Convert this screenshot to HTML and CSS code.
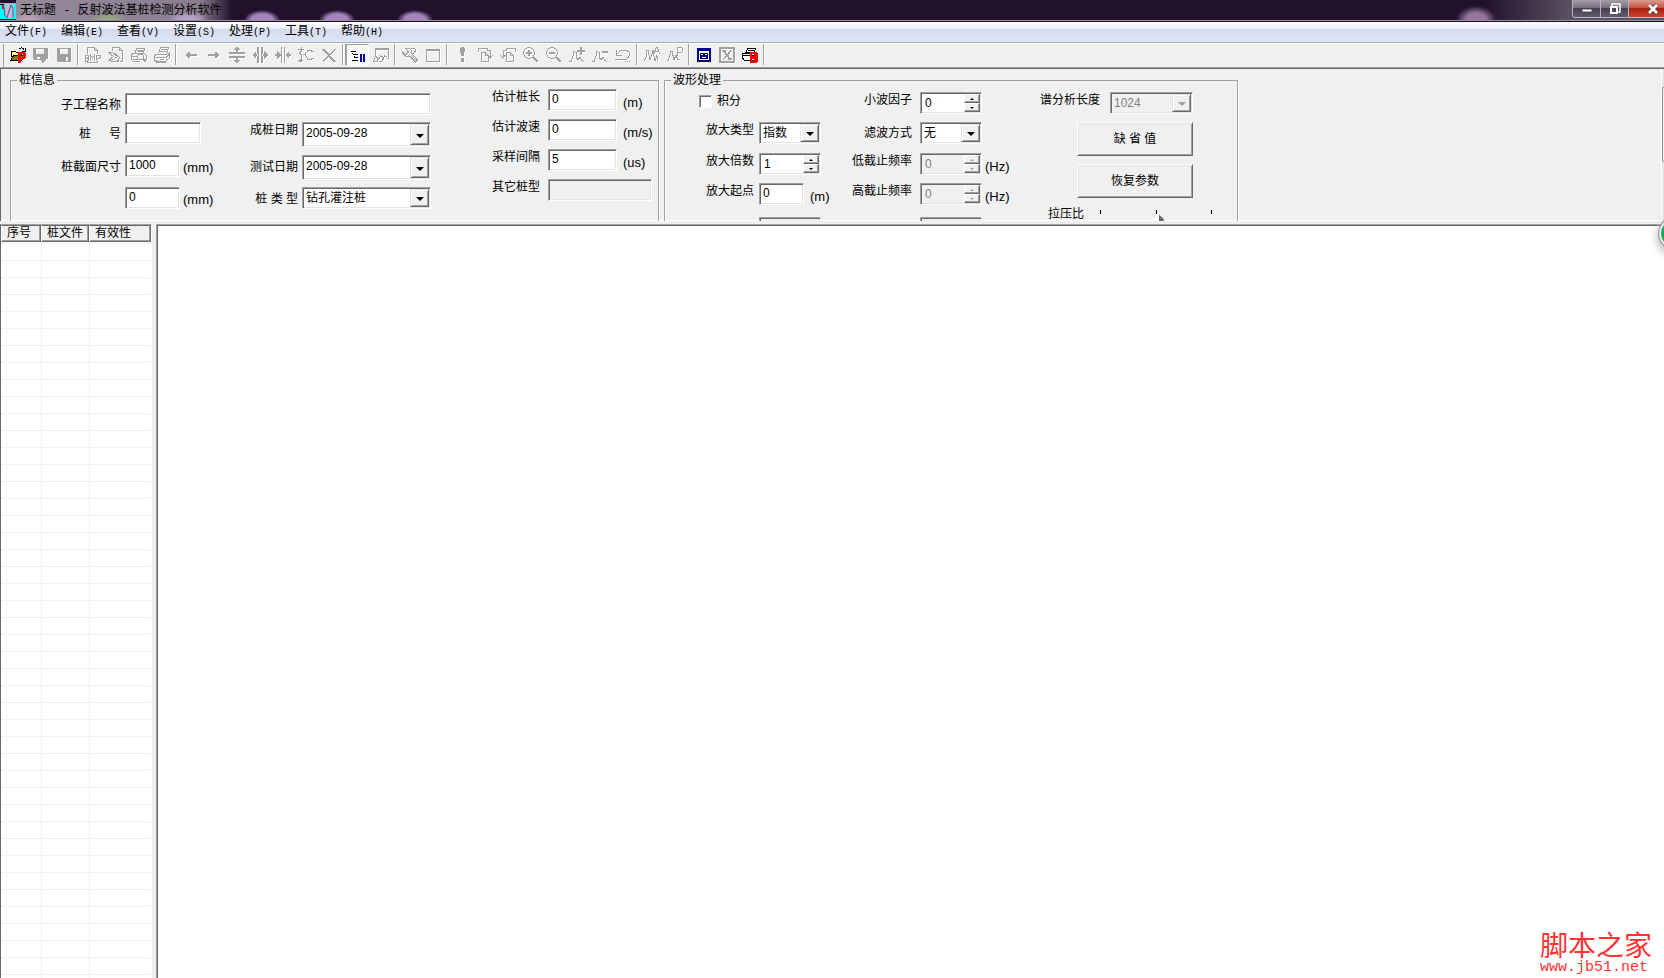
FILE: index.html
```html
<!DOCTYPE html>
<html lang="zh-CN">
<head>
    <meta charset="UTF-8">
    <meta name="viewport" content="width=device-width, initial-scale=1.0">
    <title>无标题 - 反射波法基桩检测分析软件</title>
    <link rel="stylesheet" href="styles.css">
</head>
<body>

<header class="titlebar">
    <svg class="app-icon" viewBox="0 0 16 16">
        <rect width="16" height="16" fill="#00ffff"/>
        <rect x="5" y="1" width="9" height="14" fill="#c0c0c0"/>
        <path d="M0 1h4v4h-1v-3h-3z" fill="#000"/>
        <path d="M2 2h2v4h-2z" fill="#f00"/>
        <path d="M4 4l1 9 2 2 2-7 2-6 2 3v10" fill="none" stroke="#4848d0"/>
    </svg>
    <h1 class="title">无标题 - 反射波法基桩检测分析软件</h1>
    <div class="window-buttons">
        <button class="win-btn" aria-label="最小化">
            <svg viewBox="0 0 12 12"><rect x="1" y="6" width="10" height="3" fill="#fff" stroke="#4b4858"/></svg>
        </button>
        <button class="win-btn" aria-label="还原">
            <svg viewBox="0 0 12 12"><path d="M3 3v-2h8v8h-2" fill="none" stroke="#fff" stroke-width="1.5"/><rect x="2" y="4" width="6" height="6" fill="#4b4858" stroke="#fff" stroke-width="2"/></svg>
        </button>
        <button class="win-btn win-close" aria-label="关闭">
            <svg viewBox="0 0 12 12"><path d="M2 2l8 8M10 2l-8 8" stroke="#4b4858" stroke-width="4"/><path d="M2 2l8 8M10 2l-8 8" stroke="#fff" stroke-width="2.5"/></svg>
        </button>
    </div>
</header>

<nav class="menubar">
    <a href="#">文件<span>(F)</span></a>
    <a href="#">编辑<span>(E)</span></a>
    <a href="#">查看<span>(V)</span></a>
    <a href="#">设置<span>(S)</span></a>
    <a href="#">处理<span>(P)</span></a>
    <a href="#">工具<span>(T)</span></a>
    <a href="#">帮助<span>(H)</span></a>
</nav>

<div class="toolbar">
    <button class="tool live" aria-label="打开">
        <svg viewBox="0 0 16 16">
            <path d="M1 4h4l1 1h5v4h-10z" fill="#ffff80" stroke="#000"/>
            <path d="M1 13l3-5h11l-3 5z" fill="#808000" stroke="#000"/>
            <path d="M9 2c2-2 4-1 5 1M15 1v3h-3" fill="none" stroke="#000"/>
            <path d="M8 5h6l2 1v5l-2 1h-3v4h-3zM11 7v3h2v-3z" fill="#f00" fill-rule="evenodd"/>
        </svg>
    </button>
    <button class="tool" aria-label="保存为" disabled>
        <svg viewBox="0 0 16 16"><path class="solid" d="M0 1h15v11h-2v2h-2v2h-2v-2h-1v-1h-7l-1-1zM3 2v5h8v-5zM4 10v2h3v-2z"/></svg>
    </button>
    <button class="tool" aria-label="保存" disabled>
        <svg viewBox="0 0 16 16"><path class="solid" d="M1 1h14v14h-13l-1-1zM4 2v5h8v-5zM10 10v4h2v-4z"/></svg>
    </button>
    <span class="sep"></span>
    <button class="tool" aria-label="导出位图" disabled>
        <svg viewBox="0 0 16 16"><path d="M2.500 7v-6.500h7l3 3v3.500M9.500 .5v3h3M2.500 14v1.500h10v-1.500M.5 8v6h2l1-1v-1l-1-1h-2M.5 8h2l1 1v1l-1 1M5.500 14v-6l2 3 2-3v6M11.500 14v-6h3l1 1v1l-1 1h-3"/></svg>
    </button>
    <button class="tool" aria-label="导出" disabled>
        <svg viewBox="0 0 16 16"><path d="M4.500 4v-3.500h7l3 3v11h-3M11.500 .5v3h3M.5 5.500h4l5 4-6 4h-3l5-4zM3 14.500h8M7 6l5 5-3 4"/></svg>
    </button>
    <button class="tool" aria-label="打印预览" disabled>
        <svg viewBox="0 0 16 16"><path d="M4.500 6l1-5h8l-1 5M6 3h6M7 4.500h5M1.500 6.500h12l2 2v4h-4M1.500 6.500l-1 2v4l2 2h6M1 9h6M2 12h5"/><circle cx="9.500" cy="10" r="3"/><path class="thick" d="M12 12l3 3"/></svg>
    </button>
    <button class="tool" aria-label="打印" disabled>
        <svg viewBox="0 0 16 16"><path d="M4.500 6.500l2-6h8l-2 6M7 2.500h6M6 4.500h6M1.500 7.500h11l3-2v5l-4 4h-10l-1-2v-3zM1 10.500h11l3-3M2 13.500l1 2h8l2-3M6 12.500h4"/></svg>
    </button>
    <span class="sep"></span>
    <button class="tool" aria-label="左移" disabled>
        <svg viewBox="0 0 16 16"><path class="solid" d="M2 8h1v-1h1v-1h1v-1h2v2h7v2h-7v2h-2v-1h-1v-1h-1v-1h-1z"/></svg>
    </button>
    <button class="tool" aria-label="右移" disabled>
        <svg viewBox="0 0 16 16"><path class="solid" d="M14 8h-1v-1h-1v-1h-1v-1h-2v2h-7v2h7v2h2v-1h1v-1h1v-1h1z"/></svg>
    </button>
    <button class="tool" aria-label="纵向放大" disabled>
        <svg viewBox="0 0 16 16"><path class="solid" d="M0 5h16v2h-16zM0 9h16v2h-16zM8 0l4 3h-3v2h-2v-2h-3zM8 16l4-3h-3v-2h-2v2h-3z"/></svg>
    </button>
    <button class="tool" aria-label="横向放大" disabled>
        <svg viewBox="0 0 16 16"><path class="solid" d="M5 0h2v16h-2zM9 0h2v16h-2zM0 8l4-4v3h2v2h-2v3zM16 8l-4-4v3h-2v2h2v3z"/></svg>
    </button>
    <button class="tool" aria-label="横向缩小" disabled>
        <svg viewBox="0 0 16 16"><path class="solid" d="M6 0h1v16h-1zM9 0h1v16h-1zM6 8l-4-4v3h-2v2h2v3zM10 8l4-4v3h2v2h-2v3z"/></svg>
    </button>
    <button class="tool" aria-label="曲线" disabled>
        <svg viewBox="0 0 16 16"><path d="M3.500 0v4l-2 2 2 2v4l-2 2 2 1M0 2.500h6M0 13.500h5M5 7.500h2l3-4h3l1 1h2M7 7.500l3 5h3l1-1h2"/></svg>
    </button>
    <button class="tool" aria-label="删除" disabled>
        <svg viewBox="0 0 16 16"><path class="thick" d="M2 2l12 13"/><path d="M15 2l-13 13M14 2l-12 12"/></svg>
    </button>
    <span class="sep double"></span>
    <button class="tool live pressed" aria-label="参数栏">
        <svg viewBox="0 0 16 16">
            <path d="M1 4.500h5M3 7.500h5M4 10.500h4M2 13.500h6M2 6.500h1M4 9.500h1" stroke="#000"/>
            <path d="M10 7h2v8h-2zM13 7h2v8h-2z" fill="#0000c0"/>
        </svg>
    </button>
    <button class="tool" aria-label="波形窗口" disabled>
        <svg viewBox="0 0 16 16"><path d="M2.500 8v-6.500h13v10h-2M3 2.500h12M.5 14l2-5 2 2v3l3-5 2 1v4l2-5 2 1M0 14.500h4M6 14.500h3"/></svg>
    </button>
    <span class="sep"></span>
    <button class="tool" aria-label="设置" disabled>
        <svg viewBox="0 0 16 16"><path d="M.5 5l2 2h2l2-2-3-4h4l2 3v2l6 7-2 2-6-6h-4l-3-3zM9 2l3-1 2 2-2 3h-2M9 8l5 5M8 7l-2 2"/></svg>
    </button>
    <button class="tool" aria-label="窗口" disabled>
        <svg viewBox="0 0 16 16"><path class="thick" d="M1 3h14"/><path d="M1.500 2v12.500h13v-12.500"/></svg>
    </button>
    <span class="sep"></span>
    <button class="tool" aria-label="执行" disabled>
        <svg viewBox="0 0 16 16"><path class="solid" d="M7 0h3l1 2-1 7h-3l-1-7zM7 11h3v4h-3z"/></svg>
    </button>
    <button class="tool" aria-label="顺时针" disabled>
        <svg viewBox="0 0 16 16"><path d="M1 5v-3.500h9v2h3v7M10.500 8l3 3 2-3M4.500 5.500h4l3 3v6h-7zM8 5.500v3h3"/></svg>
    </button>
    <button class="tool" aria-label="逆时针" disabled>
        <svg viewBox="0 0 16 16"><path d="M15 5v-3.500h-9v2h-3v7M.5 8l2 3 3-3M6.500 5.500h4l3 3v6h-7zM10 5.500v3h3"/></svg>
    </button>
    <button class="tool" aria-label="放大" disabled>
        <svg viewBox="0 0 16 16"><circle cx="6" cy="6" r="5.500"/><path class="thick" d="M3 6h6M6 3v6M10 10l5 5"/></svg>
    </button>
    <button class="tool" aria-label="缩小" disabled>
        <svg viewBox="0 0 16 16"><circle cx="6" cy="6" r="5.500"/><path class="thick" d="M3 6h6M10 10l5 5"/></svg>
    </button>
    <button class="tool" aria-label="幅值增大" disabled>
        <svg viewBox="0 0 16 16"><path d="M0 14.500h2l2-5 1-5 2 1v5l2 2 2-2 2 3 2 1"/><path class="thick" d="M8 4h8M12 0v8"/></svg>
    </button>
    <button class="tool" aria-label="幅值减小" disabled>
        <svg viewBox="0 0 16 16"><path d="M0 14.500h2l2-5 1-5 2 1v5l2 2 2-2 2 3 2 1"/><path class="thick" d="M10 5h6"/></svg>
    </button>
    <button class="tool" aria-label="撤销" disabled>
        <svg viewBox="0 0 16 16"><path d="M1.500 3v5h5M2 7l4-4h5l3 2v4l-2 3h-4M0 12.500h8M10 14.500h1M12 14.500h1M14 14.500h1"/></svg>
    </button>
    <span class="sep"></span>
    <button class="tool" aria-label="幅值谱" disabled>
        <svg viewBox="0 0 16 16"><path d="M0 13.500l2-3 1-7h1l2 9 2-5 1-4 2 10 2-5 1 5M10.500 7l1-5 1-2h1l2 7M11 4.500h4"/></svg>
    </button>
    <button class="tool" aria-label="功率谱" disabled>
        <svg viewBox="0 0 16 16"><path d="M0 13.500h1l2-5 1-4h1l2 8 2-4 2 4h2M10.500 9v-8.500h4l1 1v3l-1 1h-4"/></svg>
    </button>
    <span class="sep"></span>
    <button class="tool live" aria-label="预览报告">
        <svg viewBox="0 0 16 16">
            <path d="M1 1h14v14h-14z" fill="#000080"/>
            <path d="M3 4h10v9h-10z" fill="#fff"/>
            <path d="M4 6h8v6h-8z" fill="#000080"/>
            <path d="M5 7h2v1h-2zM9 7h2v1h-2zM6 10h4v1h-4z" fill="#fff"/>
        </svg>
    </button>
    <button class="tool" aria-label="关闭报告" disabled>
        <svg viewBox="0 0 16 16"><path class="thick" d="M1 1h14v14h-14z"/><path class="thick" d="M4 3l8 10M4 4h3M9 12h4"/><path d="M12 3l-8 10M13 3l-9 10"/></svg>
    </button>
    <button class="tool live" aria-label="打印报告">
        <svg viewBox="0 0 16 16">
            <path d="M4 5l2-4h8l-2 4z" fill="#fff" stroke="#000"/>
            <path d="M1 6h12l2 2v5h-13l-2-3z" fill="#fff" stroke="#000"/>
            <path d="M6 3.500h6M1 8.500h11M3 13.500h9" stroke="#000"/>
            <path d="M8 5h6l2 2v2l-1 1 1 1v3l-2 2h-6zM10 7v2h2v-2zM10 12v2h2v-2z" fill="#f00" fill-rule="evenodd"/>
        </svg>
    </button>
    <span class="sep"></span>
</div>

<section class="params">
    <fieldset class="group pile">
        <legend>桩信息</legend>
        <div class="pile-main">
            <label for="project">子工程名称</label>
            <input class="field wide" id="project" type="text">

            <label class="spread" for="pile-no"><span>桩</span><span>号</span></label>
            <input class="field no" id="pile-no" type="text">
            <label class="high" for="cast-date">成桩日期</label>
            <div class="combo tall"><select id="cast-date"><option>2005-09-28</option></select></div>

            <label for="size-a">桩截面尺寸</label>
            <div class="with-unit"><input class="field size" id="size-a" type="text" value="1000"><span class="unit">(mm)</span></div>
            <label for="test-date">测试日期</label>
            <div class="combo tall"><select id="test-date"><option>2005-09-28</option></select></div>

            <span></span>
            <div class="with-unit"><input class="field size" type="text" value="0" aria-label="截面尺寸二"><span class="unit">(mm)</span></div>
            <label for="pile-type">桩 类 型</label>
            <div class="combo cjk"><select id="pile-type"><option>钻孔灌注桩</option></select></div>
        </div>
        <div class="pile-est">
            <label for="length">估计桩长</label>
            <input class="field" id="length" type="text" value="0">
            <span class="unit">(m)</span>
            <label for="speed">估计波速</label>
            <input class="field" id="speed" type="text" value="0">
            <span class="unit">(m/s)</span>
            <label for="interval">采样间隔</label>
            <input class="field" id="interval" type="text" value="5">
            <span class="unit">(us)</span>
            <label for="other-type">其它桩型</label>
            <input class="field other" id="other-type" type="text" disabled>
        </div>
    </fieldset>

    <fieldset class="group wave">
        <legend>波形处理</legend>
        <div class="wave-gain">
            <div class="check"><input type="checkbox" id="integral"><label for="integral">积分</label></div>
            <label for="gain-type">放大类型</label>
            <div class="combo cjk"><select id="gain-type"><option>指数</option></select></div>
            <span></span>
            <label for="gain">放大倍数</label>
            <div class="spin"><input id="gain" type="text" value="1"><div class="arrows"><button class="up" aria-label="增加"></button><button class="down" aria-label="减少"></button></div></div>
            <span></span>
            <label for="gain-start">放大起点</label>
            <input class="field start" id="gain-start" type="text" value="0">
            <span class="unit">(m)</span>
            <span></span>
            <input class="field next" type="text" disabled aria-label="放大终点">
        </div>
        <div class="wave-filter">
            <label for="wavelet">小波因子</label>
            <div class="spin"><input id="wavelet" type="text" value="0"><div class="arrows"><button class="up" aria-label="增加"></button><button class="down" aria-label="减少"></button></div></div>
            <span></span>
            <label class="mid" for="filter">滤波方式</label>
            <div class="combo cjk"><select id="filter"><option>无</option></select></div>
            <span></span>
            <label for="low-cut">低截止频率</label>
            <div class="spin off"><input id="low-cut" type="text" value="0" disabled><div class="arrows"><button class="up" aria-label="增加" disabled></button><button class="down" aria-label="减少" disabled></button></div></div>
            <span class="unit">(Hz)</span>
            <label for="high-cut">高截止频率</label>
            <div class="spin off"><input id="high-cut" type="text" value="0" disabled><div class="arrows"><button class="up" aria-label="增加" disabled></button><button class="down" aria-label="减少" disabled></button></div></div>
            <span class="unit">(Hz)</span>
            <span></span>
            <input class="field next" type="text" disabled aria-label="滤波参数">
        </div>
        <div class="wave-actions">
            <div class="spectrum">
                <label for="spectrum">谱分析长度</label>
                <div class="combo off"><select id="spectrum" disabled><option>1024</option></select></div>
            </div>
            <button class="push">缺 省 值</button>
            <button class="push">恢复参数</button>
            <div class="ratio">
                <label for="ratio">拉压比</label>
                <div class="slider">
                    <div class="ticks"><i></i><i></i><i></i></div>
                    <input id="ratio" type="range" min="0" max="100" value="52">
                </div>
            </div>
        </div>
    </fieldset>
    <div class="scroll"><div class="thumb"></div></div>
</section>

<main class="workspace">
    <div class="pile-list">
        <table>
            <thead>
                <tr><th class="c-no">序号</th><th class="c-file">桩文件</th><th>有效性</th></tr>
            </thead>
        </table>
    </div>
    <div class="canvas">
        <div class="watermark">
            <div class="mark-name">脚本之家</div>
            <div class="mark-url">www.jb51.net</div>
        </div>
    </div>
    <div class="float-ball"></div>
</main>

</body>
</html>
```
FILE: styles.css
```css
* {
    box-sizing: border-box;
}

body {
    margin: 0;
    height: 100vh;
    display: flex;
    flex-direction: column;
    overflow: hidden;
    background: #f0f0f0;
    color: #000;
    font-family: "Liberation Sans", "Noto Sans CJK SC", sans-serif;
    font-size: 12px;
    line-height: 16px;
}

button, input, select {
    font: inherit;
    color: inherit;
    margin: 0;
    padding: 0;
    border: 0;
    border-radius: 0;
}

/* title bar */
.titlebar {
    height: 22px;
    flex: none;
    display: flex;
    align-items: flex-start;
    border-bottom: 1px solid #170b1e;
    box-shadow: inset 0 -1px #9c90a4;
    background:
        radial-gradient(ellipse 18px 10px at 262px 20px, #a384bd 60%, transparent),
        radial-gradient(ellipse 18px 10px at 337px 20px, #a384bd 60%, transparent),
        radial-gradient(ellipse 18px 10px at 415px 20px, #a384bd 60%, transparent),
        radial-gradient(ellipse 20px 14px at 1476px 20px, #93759c 50%, transparent),
        linear-gradient(to right, transparent calc(100% - 180px), #5c5463 calc(100% - 90px)),
        #22112c;
}

.app-icon {
    width: 16px;
    height: 16px;
    margin-top: 3px;
    flex: none;
}

.title {
    margin: 0;
    height: 20px;
    padding: 0 10px 0 4px;
    line-height: 23px;
    font-family: "Liberation Mono", "Noto Sans CJK SC", monospace;
    font-size: 12px;
    font-weight: normal;
    background:
        radial-gradient(ellipse 16px 8px at 12px 20px, #b79fae 40%, transparent),
        radial-gradient(ellipse 18px 8px at 92px 20px, #93a37f 40%, transparent),
        radial-gradient(ellipse 20px 9px at 172px 20px, #b9a0c8 40%, transparent),
        linear-gradient(to right, #958b9b 0, #897d8f 85%, transparent);
}

.window-buttons {
    display: flex;
    margin-left: auto;
    height: 18px;
    border: 1px solid #b9b4be;
    border-width: 0 0 1px 1px;
    border-radius: 0 0 0 4px;
    overflow: hidden;
}

.win-btn {
    width: 28px;
    display: flex;
    align-items: center;
    justify-content: center;
    background: linear-gradient(#a39ea8, #77717e 45%, #454050 50%, #625b6c);
    border-right: 1px solid #b9b4be;
}

.win-btn svg {
    width: 12px;
    height: 12px;
}

.win-close {
    width: 35px;
    padding-left: 12px;
    border-right: 0;
    background: linear-gradient(#d99c90, #c4533f 45%, #a81f0c 50%, #c8442c);
}

/* menu */
.menubar {
    height: 21px;
    flex: none;
    display: flex;
    padding-left: 5px;
    border-bottom: 1px solid #a9adbd;
    background: linear-gradient(#fff, #eaeff8 32%, #d5dcee 36%, #dfe4f6);
}

.menubar a {
    width: 56px;
    line-height: 18px;
    color: #000;
    text-decoration: none;
    white-space: nowrap;
}

.menubar span {
    font-family: "Liberation Mono", monospace;
    font-size: 10px;
}

/* toolbar */
.toolbar {
    height: 26px;
    flex: none;
    display: flex;
    padding-left: 6px;
    border-top: 1px solid #fff;
    border-bottom: 1px solid #696969;
    box-shadow: inset 0 -1px #a0a0a0, inset 3px 0 #f0f0f0, inset 4px 0 #a0a0a0;
}

.tool {
    width: 23px;
    height: 22px;
    display: flex;
    align-items: center;
    justify-content: center;
    background: none;
}

.tool svg {
    width: 16px;
    height: 16px;
    flex: none;
    fill: none;
    stroke: #a0a0a0;
    shape-rendering: crispEdges;
    filter: drop-shadow(1px 1px 0 #fff);
}

.tool .solid {
    fill: #a0a0a0;
    fill-rule: evenodd;
    stroke: none;
}

.tool .thick {
    stroke-width: 2;
}

.live svg {
    stroke: none;
    filter: none;
}

.pressed {
    background: #f8f8f8;
    border: 1px solid;
    border-color: #a0a0a0 #fff #fff #a0a0a0;
}

.sep {
    width: 6px;
    height: 21px;
    background: linear-gradient(to right, #a0a0a0 50%, #fff 50%) 2px 0 / 2px 100% no-repeat;
}

.double {
    border-right: 1px solid #a0a0a0;
}

/* parameter panel */
.params {
    height: 152px;
    flex: none;
    display: flex;
    position: relative;
    overflow: hidden;
    padding-left: 9px;
    border-left: 1px solid #696969;
    box-shadow: inset 0 -1px #fff;
}

.group {
    height: 164px;
    margin: 3px 5px 0 0;
    padding: 0;
    border: 1px solid #a0a0a0;
    box-shadow: inset 1px 0 #fff, 1px 0 #fff;
    display: flex;
    flex: none;
}

.group legend {
    margin-left: 6px;
    padding: 0 2px;
}

.params label {
    white-space: nowrap;
    text-align: right;
}

.unit {
    font-size: 13px;
    align-self: end;
}

.field, .combo, .spin {
    width: 100%;
    height: 22px;
    background: #fff;
    border: 1px solid;
    border-color: #a0a0a0 #fff #fff #a0a0a0;
    box-shadow: inset 1px 1px #696969, inset -1px -1px #e3e3e3;
}

.field {
    padding: 0 3px 2px;
}

.field:disabled, .combo.off, .spin.off {
    background: #f0f0f0;
    color: #808080;
}

.combo {
    position: relative;
    padding: 1px;
}

.combo select {
    appearance: none;
    width: 100%;
    height: 100%;
    padding: 0 18px 0 2px;
    background: none;
    opacity: 1;
}

.tall {
    height: 25px;
}

.tall select {
    padding-bottom: 3px;
}

.combo::before {
    content: "";
    position: absolute;
    top: 1px;
    right: 1px;
    bottom: 1px;
    width: 17px;
    background: #f0f0f0;
    border: 1px solid;
    border-color: #e3e3e3 #696969 #696969 #e3e3e3;
    box-shadow: inset 1px 1px #fff, inset -1px -1px #a0a0a0;
    pointer-events: none;
}

.combo::after {
    content: "";
    position: absolute;
    top: calc(50% - 1px);
    right: 6px;
    border: 4px solid transparent;
    border-top-color: #000;
    border-bottom: 0;
    pointer-events: none;
}

.combo.off::after {
    border-top-color: #a0a0a0;
}

.spin {
    display: flex;
    padding: 1px;
}

.spin input {
    width: 0;
    flex: 1;
    padding: 0 3px;
    background: none;
}

.arrows {
    width: 16px;
    display: flex;
    flex-direction: column;
}

.arrows button {
    flex: 1;
    display: flex;
    align-items: center;
    justify-content: center;
    background: #f0f0f0;
    border: 1px solid;
    border-color: #fff #696969 #696969 #fff;
    box-shadow: inset -1px -1px #a0a0a0;
}

.arrows button::before {
    content: "";
    border: 2px solid transparent;
}

.arrows .up::before {
    border-top: 0;
    border-bottom-color: #000;
}

.arrows .down::before {
    border-bottom: 0;
    border-top-color: #000;
}

.off .up::before {
    border-bottom-color: #a0a0a0;
}

.off .down::before {
    border-top-color: #a0a0a0;
}

/* pile information */
.pile {
    width: 649px;
}

.pile-main {
    display: grid;
    grid-template-columns: 110px 95px 74px 129px;
    grid-template-rows: 29px 33px 32px 22px;
    column-gap: 4px;
    padding-top: 5px;
    align-items: start;
    align-content: start;
}

.pile-main label {
    line-height: 25px;
}

.pile-main .high {
    line-height: 17px;
}

.pile-main .wide {
    grid-column: 2 / -1;
}

.pile-main .no {
    width: 76px;
}

.pile-main .size {
    width: 55px;
}

.spread {
    display: flex;
    justify-content: space-between;
    padding-left: 68px;
}

.with-unit {
    display: flex;
    align-items: flex-start;
    gap: 3px;
}

.with-unit .unit {
    align-self: flex-start;
    line-height: 26px;
}

.pile-est {
    display: grid;
    grid-template-columns: 48px 69px 30px;
    grid-auto-rows: 22px;
    gap: 8px;
    padding-top: 1px;
    margin-left: 61px;
    align-content: start;
}

.pile-est .unit {
    margin-left: -2px;
}

.pile-est .other {
    grid-column: 2 / -1;
    width: 104px;
}

/* wave processing */
.wave {
    width: 574px;
}

.wave-gain {
    display: grid;
    grid-template-columns: 48px 62px 24px;
    grid-template-rows: 22px 23px 22px 22px 22px;
    gap: 8px 5px;
    padding-top: 4px;
    margin-left: 41px;
    align-content: start;
}

.check {
    grid-column: 1 / -1;
    display: flex;
    align-items: flex-start;
    gap: 5px;
    margin-left: -7px;
}

.check input {
    appearance: none;
    width: 13px;
    height: 13px;
    margin-top: 3px;
    background: #fff;
    border: 1px solid;
    border-color: #a0a0a0 #fff #fff #a0a0a0;
    box-shadow: inset 1px 1px #696969;
}

.check label {
    line-height: 18px;
}

.wave-gain .start {
    width: 45px;
}

.wave-gain .unit {
    margin-left: -16px;
}

.next {
    margin-top: 4px;
}

.wave-filter {
    display: grid;
    grid-template-columns: 60px 62px 28px;
    grid-template-rows: 22px 23px 22px 22px 22px;
    gap: 8px;
    padding-top: 4px;
    margin-left: 2px;
    align-content: start;
}

.wave-filter .unit {
    margin-left: -5px;
}

.wave-filter .mid {
    line-height: 22px;
}

.wave-actions {
    display: flex;
    flex-direction: column;
    align-items: flex-end;
    gap: 8px;
    padding-top: 4px;
    margin-left: 22px;
}

.spectrum {
    display: flex;
    gap: 10px;
}

.spectrum .combo {
    width: 83px;
}

.push {
    width: 116px;
    height: 34px;
    background: #f0f0f0;
    border: 1px solid;
    border-color: #fff #696969 #696969 #fff;
    box-shadow: inset 1px 1px #e3e3e3, inset -1px -1px #a0a0a0;
}

.ratio {
    display: flex;
    align-self: stretch;
    gap: 10px;
    padding-left: 8px;
}

.slider {
    width: 124px;
    margin-right: -30px;
}

.ticks {
    display: flex;
    justify-content: space-between;
    padding: 4px 6px 0;
}

.ticks i {
    width: 1px;
    height: 4px;
    background: #000;
}

.slider input {
    appearance: none;
    display: block;
    width: 100%;
    height: 20px;
    background: none;
}

.slider input::-webkit-slider-thumb {
    appearance: none;
    width: 11px;
    height: 20px;
    background: linear-gradient(to right, #fff 50%, #696969 50%);
    clip-path: polygon(50% 0, 100% 25%, 100% 100%, 0 100%, 0 25%);
}

.scroll {
    width: 3px;
    margin-left: auto;
    padding-top: 18px;
    background: #e6e6e6;
    border-left: 1px solid #fff;
}

.thumb {
    height: 75px;
    background: #f4f4f4;
    border: 1px solid #8c8c8c;
    border-right: 0;
    border-radius: 2px 0 0 2px;
}

/* lower panes */
.workspace {
    flex: 1;
    min-height: 0;
    display: flex;
    gap: 4px;
    padding-top: 3px;
    position: relative;
}

.pile-list {
    width: 152px;
    flex: none;
    border-top: 1px solid #a0a0a0;
    border-left: 1px solid #696969;
    border-right: 1px solid #fff;
    background:
        linear-gradient(#f0f0f0, #f0f0f0) 40px 0 / 1px 100% no-repeat,
        linear-gradient(#f0f0f0, #f0f0f0) 88px 0 / 1px 100% no-repeat,
        repeating-linear-gradient(transparent 0 16px, #f0f0f0 16px 17px) 0 2px,
        #fff;
}

.pile-list table {
    width: 100%;
    table-layout: fixed;
    border-collapse: separate;
    border-spacing: 0;
}

.pile-list th {
    height: 17px;
    padding: 0 0 0 5px;
    font-weight: normal;
    line-height: 15px;
    text-align: left;
    white-space: nowrap;
    background: #f0f0f0;
    border: 1px solid;
    border-color: #696969 #696969 #696969 #fff;
    box-shadow: inset -1px -1px #a0a0a0;
}

.pile-list .c-no {
    width: 40px;
}

.pile-list .c-file {
    width: 48px;
}

.canvas {
    flex: 1;
    display: flex;
    align-items: flex-end;
    justify-content: flex-end;
    background: #fff;
    border-top: 1px solid #a0a0a0;
    border-left: 1px solid #a0a0a0;
    box-shadow: inset 1px 1px #696969;
}

.watermark {
    padding: 0 12px 2px 0;
    color: #ff3333;
}

.mark-name {
    font-family: "Noto Sans CJK SC", serif;
    font-size: 28px;
    line-height: 32px;
}

.mark-url {
    font-family: "Liberation Mono", monospace;
    font-size: 15px;
    line-height: 16px;
}

/* desktop helper peeking in from the right edge */
.float-ball {
    position: absolute;
    top: -3px;
    right: -26px;
    width: 31px;
    height: 31px;
    border: 2px solid #e8e8e8;
    border-radius: 50%;
    background: #1fa860;
    box-shadow: 0 0 0 1px #909090, 0 4px 8px 2px #bbb;
}
```
